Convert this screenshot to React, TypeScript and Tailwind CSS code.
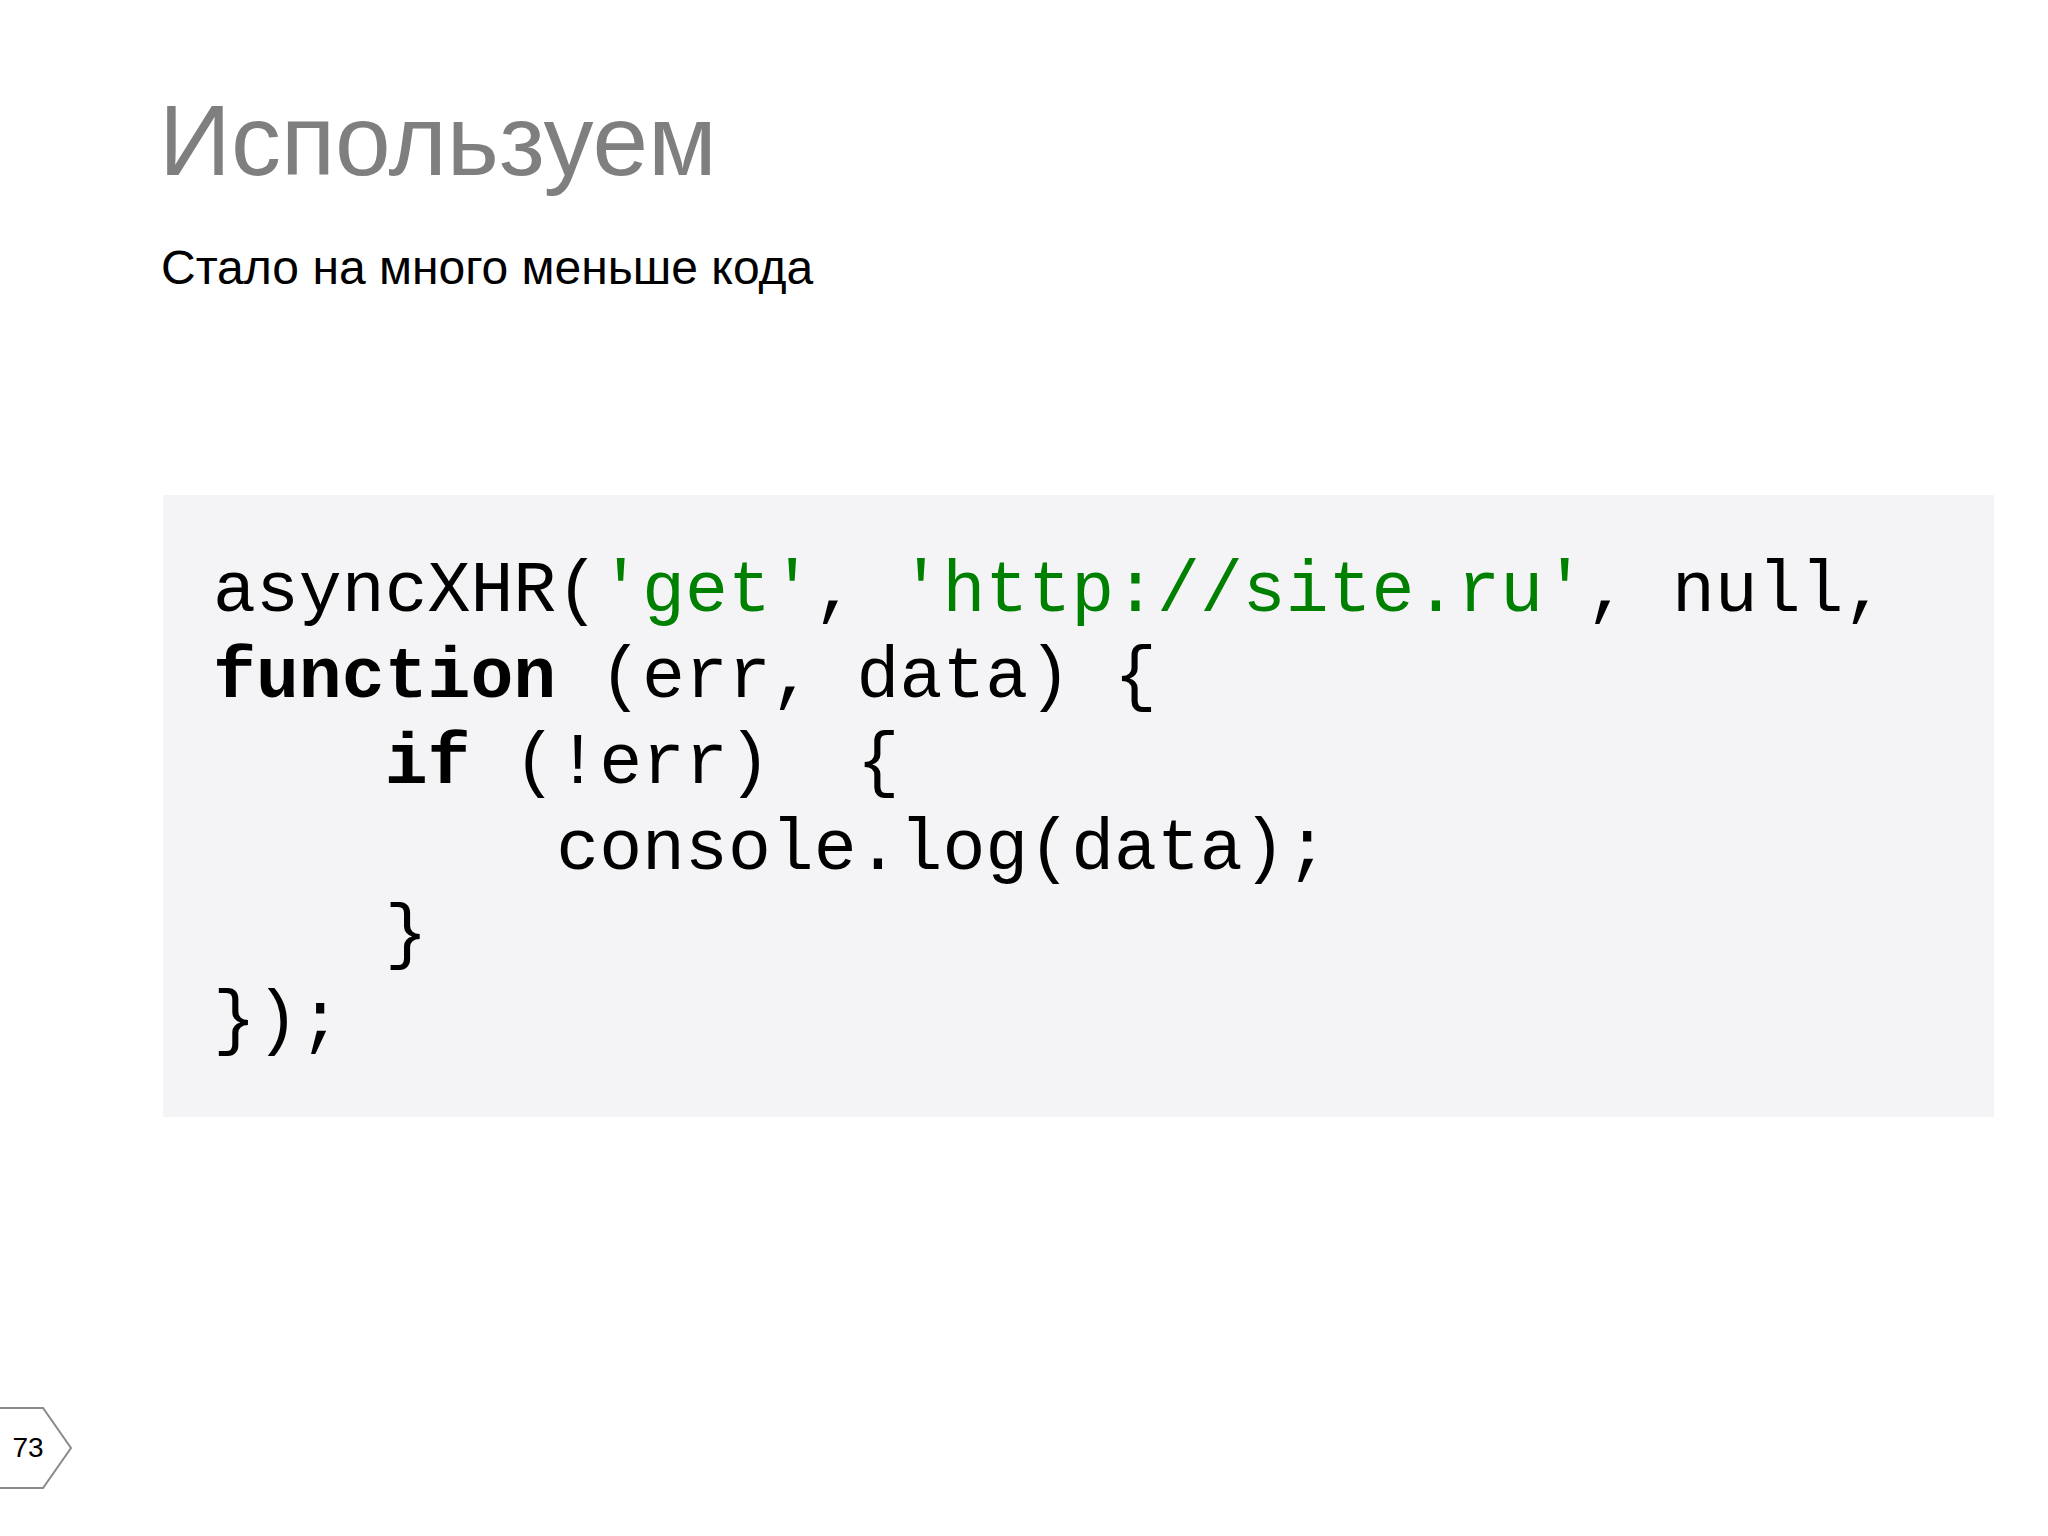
import React from "react";

const mono = { fontFamily: "'Courier New', 'Nimbus Mono PS', FreeMono, 'Liberation Mono', monospace" };

type Token = { text: string; kind?: "kw" | "str" };

const codeLines: Token[][] = [
  [
    { text: "asyncXHR(" },
    { text: "'get'", kind: "str" },
    { text: ", " },
    { text: "'http://site.ru'", kind: "str" },
    { text: ", null," },
  ],
  [{ text: "function", kind: "kw" }, { text: " (err, data) {" }],
  [{ text: "    " }, { text: "if", kind: "kw" }, { text: " (!err)  {" }],
  [{ text: "        console.log(data);" }],
  [{ text: "    }" }],
  [{ text: "});" }],
];

const PageBadge = ({ n }: { n: number }) => (
  <div className="relative w-[74px] h-[84px]">
    <svg width="74" height="84" viewBox="0 0 74 84" className="block">
      <path d="M-2 2 H43 L71 42 L43 82 H-2" fill="white" stroke="#8a8a8a" strokeWidth="2" />
    </svg>
    <span
      className="absolute left-0 top-0 w-[56px] h-[84px] flex items-center justify-center text-[28px] text-black"
      style={{ fontFamily: "'Liberation Sans', Arial, sans-serif" }}
    >
      {n}
    </span>
  </div>
);

export default function App() {
  return (
    <div
      className="w-[2048px] h-[1536px] bg-white flex flex-col overflow-hidden"
      style={{ fontFamily: "'Liberation Sans', Arial, sans-serif" }}
    >
      <div className="pl-[159px] pt-[84px]">
        <h1 className="text-[100px] leading-[112px] text-[#7f7f7f] font-normal">Используем</h1>
        <p className="mt-[45px] pl-[2px] text-[48px] leading-[54px] text-black">Стало на много меньше кода</p>
      </div>

      {/* code block */}
      <div className="ml-[163px] mt-[200px] w-[1831px] h-[622px] bg-[#f4f4f6] pl-[50px] pt-[54px]">
        <pre className="text-[71.5px] leading-[86px] text-black" style={mono}>
          {codeLines.map((line, i) => (
            <div key={i}>
              {line.map((t, j) => (
                <span
                  key={j}
                  className={
                    t.kind === "kw" ? "font-bold" : t.kind === "str" ? "text-[#008000]" : ""
                  }
                >
                  {t.text}
                </span>
              ))}
            </div>
          ))}
        </pre>
      </div>

      <div className="mt-auto mb-[46px]">
        <PageBadge n={73} />
      </div>
    </div>
  );
}
